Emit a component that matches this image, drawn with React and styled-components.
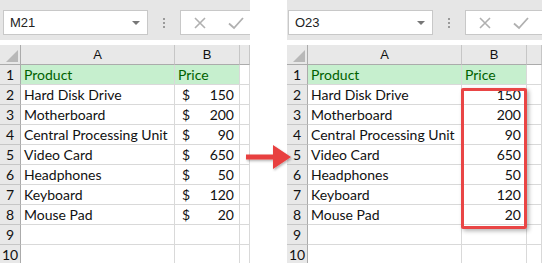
import styled, { createGlobalStyle } from "styled-components";

const GlobalStyle = createGlobalStyle`
  html, body {
    margin: 0;
    padding: 0;
    background: #ffffff;
  }
  body {
    font-family: Lato, "Liberation Sans", sans-serif;
  }
`;

const products = [
  ["Hard Disk Drive", 150],
  ["Motherboard", 200],
  ["Central Processing Unit", 90],
  ["Video Card", 650],
  ["Headphones", 50],
  ["Keyboard", 120],
  ["Mouse Pad", 20],
];

const Sheet = ({ cellRef, currency, highlight, width, inset }) => {
  return (
    <Panel $width={width}>
      {/* FORMULA BAR */}

      <Toolbar $inset={inset}>
        <NameBox>
          <span>{cellRef}</span>
          <Caret />
        </NameBox>
        <Dots>
          <i />
          <i />
          <i />
        </Dots>
        <FormulaBox>
          <svg width="14" height="14" viewBox="0 0 14 14">
            <path d="M2 2 L12 12 M12 2 L2 12" stroke="#b0b0b0" strokeWidth="1.6" fill="none" />
          </svg>
          <svg width="18" height="14" viewBox="0 0 18 14">
            <path d="M2 7.5 L7 12 L16 2" stroke="#b0b0b0" strokeWidth="1.8" fill="none" />
          </svg>
        </FormulaBox>
      </Toolbar>

      {/* GRID */}

      <Grid>
        <Corner />
        <ColHead>A</ColHead>
        <ColHead>B</ColHead>
        <ColHead />

        <RowHead>1</RowHead>
        <Cell $title>Product</Cell>
        <Cell $title>Price</Cell>
        <Cell />

        {products.map(([name, price], i) => (
          <Row key={name}>
            <RowHead>{i + 2}</RowHead>
            <Cell>{name}</Cell>
            <Cell $number>
              {currency && <span>$</span>}
              <b>{price}</b>
            </Cell>
            <Cell />
          </Row>
        ))}

        {[9, 10].map((n) => (
          <Row key={n}>
            <RowHead>{n}</RowHead>
            <Cell />
            <Cell />
            <Cell />
          </Row>
        ))}

        {highlight && <Highlight />}
      </Grid>
    </Panel>
  );
};

const App = () => {
  return (
    <Page>
      <GlobalStyle />
      <Sheet cellRef="M21" currency width={250} inset={3} />
      <ArrowSlot>
        <svg width="52" height="30" viewBox="0 0 52 30">
          <defs>
            <filter id="arrowShadow" x="-20%" y="-30%" width="140%" height="160%">
              <feDropShadow dx="1" dy="1.5" stdDeviation="1.2" floodColor="#000" floodOpacity="0.3" />
            </filter>
          </defs>
          <path
            d="M3 12.5 L30 12.5 L30 3 L48 15 L30 27 L30 17.5 L3 17.5 Z"
            fill="#e8403f"
            strokeLinejoin="round"
            filter="url(#arrowShadow)"
          />
        </svg>
      </ArrowSlot>
      <Sheet cellRef="O23" highlight width={255} inset={1} />
    </Page>
  );
};

const Page = styled.div`
  display: flex;
  flex-direction: row;
  align-items: flex-start;
  width: 542px;
  height: 263px;
  overflow: hidden;
`;

const Panel = styled.div`
  width: ${(p) => p.$width}px;
  flex-shrink: 0;
  display: flex;
  flex-direction: column;
  overflow: hidden;
`;

const Toolbar = styled.div`
  height: 40px;
  background: #e6e6e6;
  display: flex;
  flex-direction: row;
  align-items: flex-start;
  padding: 10px 0 0 ${(p) => p.$inset}px;
  box-sizing: border-box;
  margin-bottom: 5px;
`;

const NameBox = styled.div`
  width: 145px;
  height: 25px;
  box-sizing: border-box;
  background: #ffffff;
  border: 1px solid #c8c8c8;
  display: flex;
  align-items: center;
  justify-content: space-between;
  padding: 0 7px 0 6px;
  font-family: "Liberation Sans", sans-serif;
  font-size: 13px;
  color: #222;
  flex-shrink: 0;
`;

const Caret = styled.i`
  width: 0;
  height: 0;
  border-left: 4px solid transparent;
  border-right: 4px solid transparent;
  border-top: 4px solid #777;
`;

const Dots = styled.div`
  width: 32px;
  height: 25px;
  display: flex;
  flex-direction: column;
  align-items: center;
  justify-content: center;
  gap: 2px;
  flex-shrink: 0;

  i {
    width: 2px;
    height: 2px;
    background: #9a9a9a;
  }
`;

const FormulaBox = styled.div`
  flex: 1;
  height: 25px;
  box-sizing: border-box;
  background: #ffffff;
  border: 1px solid #c8c8c8;
  border-right: none;
  display: flex;
  align-items: center;
  gap: 20px;
  padding-left: 12px;
  flex-shrink: 0;
  min-width: 80px;
`;

const Grid = styled.div`
  position: relative;
  display: grid;
  grid-template-columns: 21px 154px 65px 1fr;
  grid-auto-rows: 20px;
  font-size: 14px;
  color: #111;
`;

const Row = styled.div`
  display: contents;
`;

const Corner = styled.div`
  background: #e8e8e8;
  border-right: 1px solid #ababab;
  border-bottom: 1px solid #ababab;
  position: relative;

  &::after {
    content: "";
    position: absolute;
    right: 2px;
    bottom: 2px;
    border-left: 12px solid transparent;
    border-bottom: 12px solid #b8b8b8;
  }
`;

const ColHead = styled.div`
  background: #e8e8e8;
  border-right: 1px solid #c6c6c6;
  border-bottom: 1px solid #ababab;
  display: flex;
  align-items: center;
  justify-content: center;
  font-family: "Liberation Sans", sans-serif;
  font-size: 13px;
  color: #111;
`;

const RowHead = styled.div`
  background: #e8e8e8;
  border-right: 1px solid #ababab;
  border-bottom: 1px solid #c6c6c6;
  display: flex;
  align-items: center;
  justify-content: center;
  font-size: 14px;
  color: #111;
  overflow: hidden;
`;

const Cell = styled.div`
  border-right: 1px solid #d9d9d9;
  border-bottom: 1px solid #d9d9d9;
  display: flex;
  align-items: center;
  justify-content: ${(p) => (p.$number ? "space-between" : "flex-start")};
  padding: 0 ${(p) => (p.$number ? "5px" : "3px")} 0 ${(p) => (p.$number ? "7px" : "3px")};
  white-space: nowrap;
  overflow: hidden;
  background: ${(p) => (p.$title ? "#c6efce" : "#ffffff")};
  color: ${(p) => (p.$title ? "#006100" : "#111")};

  b {
    font-weight: normal;
    margin-left: auto;
  }
`;

const Highlight = styled.div`
  position: absolute;
  left: 174px;
  top: 43px;
  width: 66px;
  height: 141px;
  box-sizing: border-box;
  border: 3px solid #e94545;
  border-radius: 2px;
  box-shadow: 2px 2px 4px rgba(0, 0, 0, 0.3);
  pointer-events: none;
`;

const ArrowSlot = styled.div`
  width: 37px;
  flex-shrink: 0;
  padding-top: 142px;
  position: relative;
  z-index: 1;
  margin-left: -7px;
  margin-right: 7px;

  svg {
    display: block;
  }
`;

export default App;
